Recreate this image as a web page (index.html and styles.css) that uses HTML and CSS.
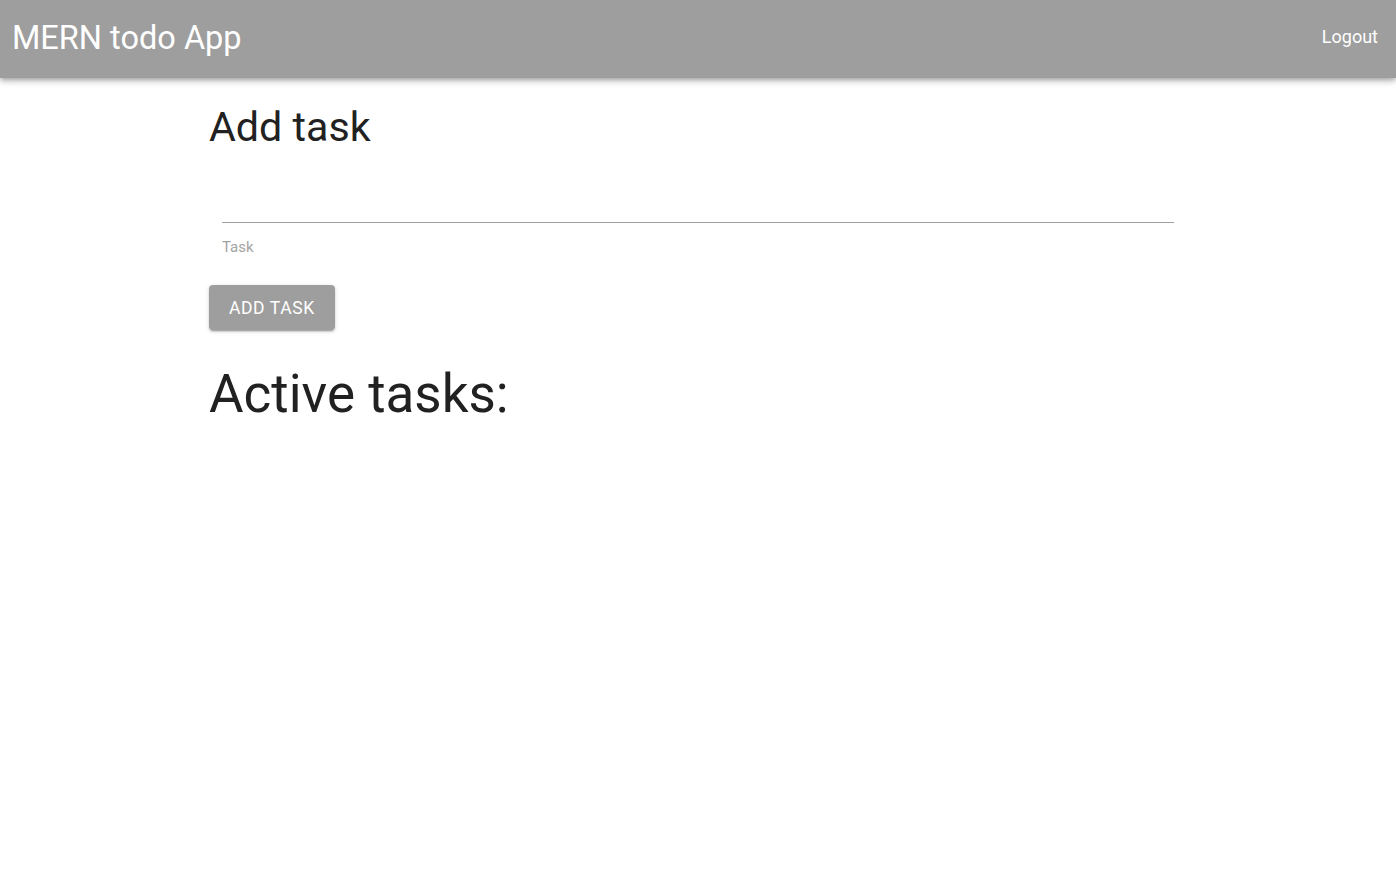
FILE: index.html
```html
<!DOCTYPE html>
<html>
<head>
<meta charset="utf-8">
<link rel="stylesheet" href="styles.css">
</head>
<body>
<header class="appbar">
  <div class="brand">MERN todo App</div>
  <button class="logout">Logout</button>
</header>
<main class="content">
  <h1 class="heading-add">Add task</h1>
  <div class="field">
    <div class="field-input"></div>
    <div class="field-label">Task</div>
  </div>
  <button class="add-btn">ADD TASK</button>
  <h2 class="heading-active">Active tasks:</h2>
</main>
</body>
</html>
```
FILE: styles.css
```css
* { box-sizing: border-box; }
html, body { margin: 0; padding: 0; background: #fff; }
body { font-family: Roboto, "Liberation Sans", sans-serif; color: #212121; }

.appbar {
  height: 78px;
  background: #9e9e9e;
  display: flex;
  align-items: center;
  justify-content: space-between;
  padding: 0 18px 0 12px;
  box-shadow: 0 2px 4px -1px rgba(0,0,0,0.2), 0 4px 5px 0 rgba(0,0,0,0.14), 0 1px 10px 0 rgba(0,0,0,0.12);
}
.brand {
  color: #fff;
  font-size: 32.5px;
  line-height: 1;
  font-weight: 400;
  margin-top: -1px;
}
.logout {
  background: none;
  border: 0;
  padding: 0;
  color: #fff;
  font-family: inherit;
  font-size: 18px;
  line-height: 1;
  margin-top: -4px;
}

.content {
  margin-left: 209px;
  width: 965px;
  display: flex;
  flex-direction: column;
  align-items: flex-start;
}
.heading-add {
  margin: 25px 0 0;
  font-size: 41.2px;
  font-weight: 400;
  line-height: 1.2;
}
.field {
  align-self: stretch;
  margin: 0 0 0 13px;
}
.field-input {
  height: 71px;
  border-bottom: 1px solid #9e9e9e;
}
.field-label {
  margin-top: 17px;
  font-size: 15px;
  line-height: 1;
  color: #a3a3a3;
}
.add-btn {
  margin-top: 30px;
  height: 45px;
  padding: 0 20px;
  background: #9e9e9e;
  color: #fff;
  border: 0;
  border-radius: 4px;
  font-family: inherit;
  font-size: 17.5px;
  letter-spacing: 0.6px;
  box-shadow: 0 3px 1px -2px rgba(0,0,0,0.2), 0 2px 2px 0 rgba(0,0,0,0.14), 0 1px 5px 0 rgba(0,0,0,0.12);
}
.heading-active {
  margin: 33px 0 0;
  font-size: 53px;
  font-weight: 400;
  line-height: 1.2;
}
```
